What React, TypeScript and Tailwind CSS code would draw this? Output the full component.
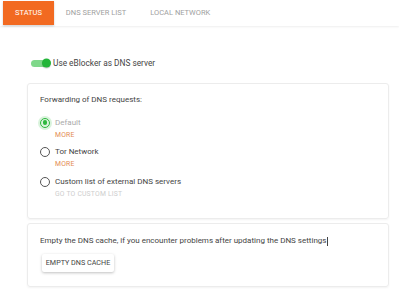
import React from 'react';

function Radio({ checked }: { checked?: boolean }) {
  if (checked) {
    return (
      <span className="flex h-[14px] w-[14px] items-center justify-center rounded-full bg-[#d9f3dc]">
        <span className="flex h-[10px] w-[10px] items-center justify-center rounded-full border-[1.5px] border-[#2eb83e]">
          <span className="h-[4.5px] w-[4.5px] rounded-full bg-[#2eb83e]" />
        </span>
      </span>
    );
  }
  return (
    <span className="flex h-[14px] w-[14px] items-center justify-center">
      <span className="h-[10px] w-[10px] rounded-full border-[1.2px] border-[#555]" />
    </span>
  );
}

function Option({
  label,
  link,
  checked,
  muted,
}: {
  label: string;
  link: string;
  checked?: boolean;
  muted?: boolean;
}) {
  return (
    <div className="flex flex-col">
      <div className="flex h-[14px] items-center gap-[3px]">
        <Radio checked={checked} />
        <span className={`text-[8px] leading-[10px] ${checked ? 'text-[#aaa]' : 'text-[#444]'}`}>{label}</span>
      </div>
      <span
        className={`ml-[17px] text-[6.8px] leading-[10px] tracking-[0.2px] ${
          muted ? 'text-[#cdcdcd]' : 'text-[#e38a52]'
        }`}
      >
        {link}
      </span>
    </div>
  );
}

export default function App() {
  return (
    <div
      className="h-[295px] w-[399px] overflow-hidden bg-white"
      style={{ fontFamily: 'Roboto, "Liberation Sans", sans-serif' }}
    >
      <div className="flex h-[26px] pl-[3px] pt-[1px] shadow-[0_1px_2px_rgba(0,0,0,0.07)]">
        <div className="flex h-[24px] items-center bg-[#f26a21] px-[12px] text-[7.5px] text-white shadow-[0_1px_2px_rgba(0,0,0,0.2)]">
          STATUS
        </div>
        <div className="flex h-[24px] items-center px-[12px] text-[7.5px] text-[#a0a0a0]">DNS SERVER LIST</div>
        <div className="flex h-[24px] items-center px-[12px] text-[7.5px] text-[#a0a0a0]">LOCAL NETWORK</div>
      </div>

      <div className="flex flex-col pl-[27px] pr-[10px]">
        <div className="ml-[4px] mt-[32px] flex h-[10px] items-center gap-[2px]">
          <span className="relative flex h-[10px] w-[20px] items-center">
            <span className="h-[7px] w-[17px] rounded-full bg-[#7fd88a]" />
            <span className="absolute right-0 top-0 h-[9px] w-[9px] translate-y-[0.5px] rounded-full bg-[#22b538] shadow-[0_1px_1px_rgba(0,0,0,0.2)]" />
          </span>
          <span className="text-[8.3px] leading-[10px] text-[#444]">Use eBlocker as DNS server</span>
        </div>

        <div className="mt-[15px] flex h-[136px] flex-col rounded-[3px] border border-[#ececec] px-[12px] pt-[11px] shadow-[0_1px_2px_rgba(0,0,0,0.05)]">
          <span className="text-[8px] leading-[10px] text-[#444]">Forwarding of DNS requests:</span>
          <div className="-ml-[2px] mt-[10.5px] flex flex-col gap-[5.5px]">
            <Option label="Default" link="MORE" checked />
            <Option label="Tor Network" link="MORE" />
            <Option label="Custom list of external DNS servers" link="GO TO CUSTOM LIST" muted />
          </div>
        </div>

        <div className="mt-[4px] flex h-[64px] flex-col items-start rounded-[3px] border border-[#ececec] px-[12px] pt-[12px] shadow-[0_1px_2px_rgba(0,0,0,0.05)]">
          <span className="flex items-center text-[8px] leading-[10px] text-[#444]">
            Empty the DNS cache, if you encounter problems after updating the DNS settings
            <span className="ml-[1px] h-[9px] w-[1px] bg-[#444]" />
          </span>
          <button
            type="button"
            className="ml-[2px] mt-[8px] h-[18px] w-[72px] rounded-[2px] bg-white text-[7.2px] text-[#444] shadow-[0_1px_3px_rgba(0,0,0,0.25)]"
          >
            EMPTY DNS CACHE
          </button>
        </div>
      </div>
    </div>
  );
}
